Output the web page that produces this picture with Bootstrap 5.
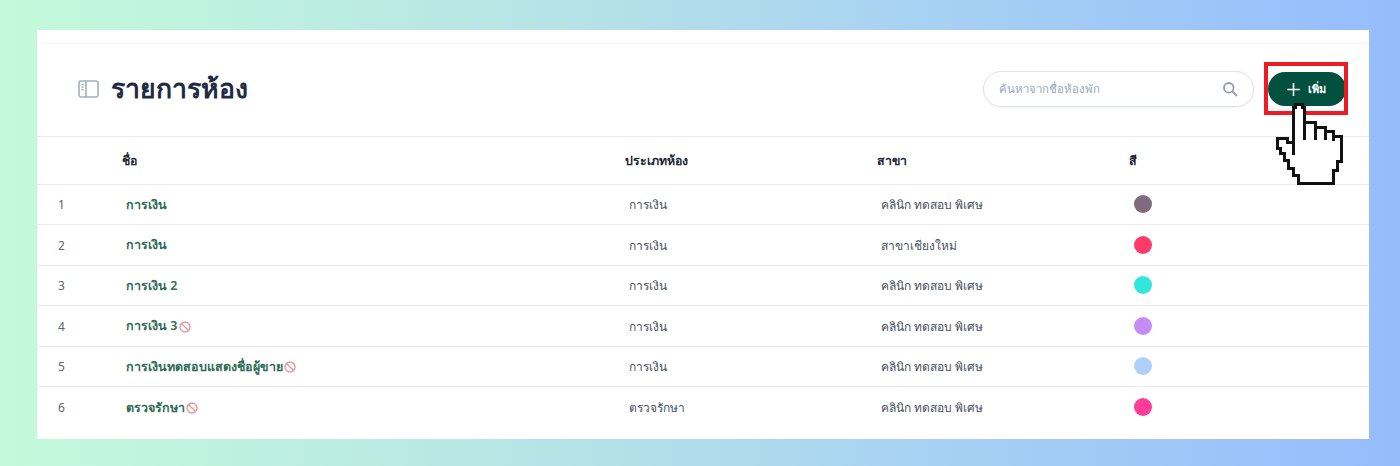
<!DOCTYPE html>
<html lang="th">

<head>
    <meta charset="UTF-8">
    <meta name="viewport" content="width=device-width, initial-scale=1.0">
    <title>รายการห้อง</title>
    <link href="https://cdn.jsdelivr.net/npm/bootstrap@5.3.0/dist/css/bootstrap.min.css" rel="stylesheet">
    <style>
        html,
        body {
            height: 466px;
            overflow: hidden;
        }

        body {
            background: linear-gradient(90deg, #c4fadb 0%, #b6e3e6 40%, #a8d2f2 65%, #96bcfc 100%);
            font-family: "Noto Sans", "Inter", "Liberation Sans", sans-serif;
            padding: 30px 31px 27px 37px;
        }

        .room-panel {
            position: relative;
            background-color: #fff;
            height: 409px;
            padding-top: 13px;
        }

        .room-head {
            height: 94px;
            padding: 0 23px 2px 41px;
            border-top: 1px solid #f5f6f8;
            border-bottom: 1px solid #e6e9ef;
        }

        .room-title {
            font-size: 26.6px;
            font-weight: 700;
            color: #1f2a44;
            margin: 0 0 0 12px;
        }

        .room-search {
            width: 271px;
            height: 36px;
            padding: 0 15px 0 13px;
            border: 1px solid #dde3ee;
            border-radius: 18px;
            margin-right: 14px;
            box-shadow: 0 1px 2px rgba(30, 50, 90, .06);
        }

        .room-search input {
            border: 0;
            outline: 0;
            flex: 1;
            min-width: 0;
            font-size: 11.4px;
        }

        .room-search input::placeholder {
            color: #9aa5b8;
        }

        .room-add {
            width: 78px;
            height: 34px;
            padding: 0 2px 0 0;
            border-radius: 17px;
            border: 0;
            background-color: #02513f;
            color: #fff;
            font-size: 11px;
            font-weight: 700;
        }

        .room-table {
            table-layout: fixed;
            width: 100%;
            margin: 0;
            font-size: 12px;
        }

        .room-table th {
            height: 47px;
            padding: 2px 5px 0;
            font-size: 12.3px;
            font-weight: 700;
            color: #1d2433;
            vertical-align: middle;
            border-bottom: 1px solid #e6e9ef;
        }

        .room-table td {
            height: 40.5px;
            padding: 2px 9px 0;
            color: #4a5160;
            vertical-align: middle;
            border-bottom: 1px solid #e9ecf2;
        }

        .room-table tr:last-child td {
            border-bottom: 0;
        }

        .room-table td.room-no {
            padding-left: 21px;
            color: #5c6675;
        }

        .room-table td.room-name {
            font-size: 12.5px;
            font-weight: 600;
            color: #2f6b58;
        }

        .room-table td.room-name svg {
            margin-left: -2px;
        }

        .room-dot {
            display: block;
            width: 18px;
            height: 18px;
            border-radius: 50%;
            margin: 0 0 2px 1px;
        }

        .dot-1 { background-color: #7f6b7b; }
        .dot-2 { background-color: #ff3b6b; }
        .dot-3 { background-color: #33e6dc; }
        .dot-4 { background-color: #c78bf7; }
        .dot-5 { background-color: #afd0fa; }
        .dot-6 { background-color: #ff3c9a; }

        .add-mark {
            position: absolute;
            left: 1227px;
            top: 32px;
            width: 84px;
            height: 53px;
            border: 4px solid #ed1c24;
            pointer-events: none;
        }

        .add-hand {
            position: absolute;
            left: 1238px;
            top: 70px;
        }
    </style>
</head>

<body>
    <div class="room-panel">
        <div class="room-head d-flex align-items-center">
            <svg width="21" height="18" viewBox="0 0 21 18" fill="none" stroke="#a3aec2" stroke-width="1.6">
                <rect x="1" y="1" width="19" height="16" rx="2" />
                <path d="M8 1v16" />
                <path d="M3.5 4.5h2M3.5 7h2M3.5 9.5h2" />
            </svg>
            <h1 class="room-title">รายการห้อง</h1>
            <div class="room-search d-flex align-items-center ms-auto">
                <input type="text" placeholder="ค้นหาจากชื่อห้องพัก">
                <svg width="16" height="16" viewBox="0 0 16 16" fill="none" stroke="#8f9db3" stroke-width="1.8">
                    <circle cx="6.8" cy="6.8" r="4.8" />
                    <path d="M10.5 10.5 15 15" />
                </svg>
            </div>
            <button class="room-add d-flex align-items-center justify-content-center gap-2" type="button">
                <svg width="13" height="13" viewBox="0 0 13 13" stroke="#fff" stroke-width="1.6">
                    <path d="M6.5 0v13M0 6.5h13" />
                </svg>
                <span>เพิ่ม</span>
            </button>
        </div>

        <table class="room-table">
            <colgroup>
                <col style="width: 80px">
                <col style="width: 503px">
                <col style="width: 252px">
                <col style="width: 252px">
                <col>
            </colgroup>
            <thead>
                <tr>
                    <th></th>
                    <th>ชื่อ</th>
                    <th>ประเภทห้อง</th>
                    <th>สาขา</th>
                    <th>สี</th>
                </tr>
            </thead>
            <tbody id="roomRows"></tbody>
        </table>

        <div class="add-mark"></div>
        <svg class="add-hand" width="70" height="88" viewBox="0 0 70 88" fill="#fff" stroke="#111" stroke-width="3" shape-rendering="crispEdges">
            <path d="M18 7H20V4H27V7H29V22H40V27H50V31H58V36H66V61H62V70H58V83H23V75H18V68H13V60H9V53H5V48H2V38H12V42H18Z" />
            <path d="M18 42V55M29 22V40M40 27V40M50 31V40M58 36V41" fill="none" />
        </svg>
    </div>

    <script src="https://cdn.jsdelivr.net/npm/bootstrap@5.3.0/dist/js/bootstrap.bundle.min.js"></script>
    <script>
        const rooms = [
            { name: "การเงิน", type: "การเงิน", branch: "คลินิก ทดสอบ พิเศษ", off: false },
            { name: "การเงิน", type: "การเงิน", branch: "สาขาเชียงใหม่", off: false },
            { name: "การเงิน 2", type: "การเงิน", branch: "คลินิก ทดสอบ พิเศษ", off: false },
            { name: "การเงิน 3", type: "การเงิน", branch: "คลินิก ทดสอบ พิเศษ", off: true },
            { name: "การเงินทดสอบแสดงชื่อผู้ขาย", type: "การเงิน", branch: "คลินิก ทดสอบ พิเศษ", off: true },
            { name: "ตรวจรักษา", type: "ตรวจรักษา", branch: "คลินิก ทดสอบ พิเศษ", off: true }
        ];
        const offIcon = `<svg width="12" height="12" viewBox="0 0 12 12" fill="none" stroke="#e8989c" stroke-width="1.4"><circle cx="6" cy="6" r="5"/><path d="M2.5 2.5l7 7"/></svg>`;

        document.getElementById("roomRows").innerHTML = rooms.map((room, index) => `
            <tr>
                <td class="room-no">${index + 1}</td>
                <td class="room-name">${room.name} ${room.off ? offIcon : ""}</td>
                <td>${room.type}</td>
                <td>${room.branch}</td>
                <td><span class="room-dot dot-${index + 1}"></span></td>
            </tr>`).join("");
    </script>
</body>

</html>
